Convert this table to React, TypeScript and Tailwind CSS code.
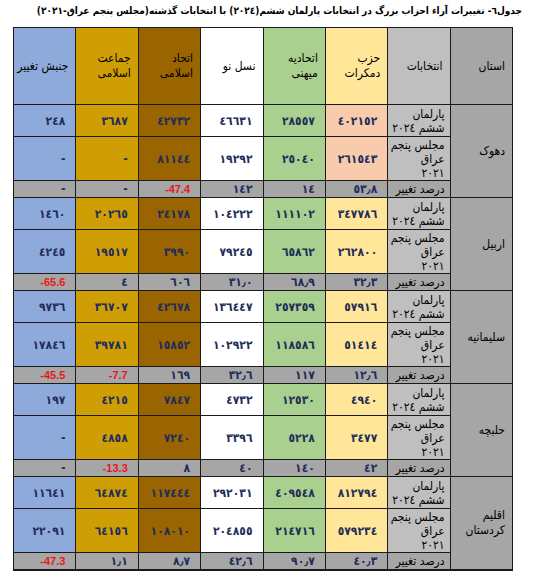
import React from "react";

type Group = { name: React.ReactNode; dem: string; rows: string[][] };

const groups: Group[] = [
  {
    name: "دهوک",
    dem: "bg-[#f8cbad]",
    rows: [
      ["٤٠٢١٥٢", "٢٨٥٥٧", "٤٦٦٣١", "٤٢٧٣٢", "٣٦٨٧", "٢٤٨"],
      ["٢٦١٥٤٣", "٢٥٠٤٠", "١٩٢٩٢", "٨١١٤٤", "-", "-"],
      ["٥٣٫٨", "١٤", "١٤٢", "-47.4", "-", "-"],
    ],
  },
  {
    name: "اربیل",
    dem: "bg-[#ffe699]",
    rows: [
      ["٣٤٧٧٨٦", "١١١١٠٢", "١٠٤٢٢٢", "٢٤١٧٨", "٢٠٢٦٥", "١٤٦٠"],
      ["٢٦٢٨٠٠", "٦٥٨٦٢", "٧٩٢٤٥", "٣٩٩٠", "١٩٥١٧", "٤٢٤٥"],
      ["٣٢٫٣", "٦٨٫٩", "٣١٫٠", "٦٠٦", "٤", "-65.6"],
    ],
  },
  {
    name: "سلیمانیه",
    dem: "bg-[#ffe699]",
    rows: [
      ["٥٧٩١٦", "٢٥٧٣٥٩", "١٣٦٤٤٧", "٤٢٦٧٨", "٣٦٧٠٧", "٩٧٣٦"],
      ["٥١٤١٤", "١١٨٥٨٦", "١٠٢٩٢٢", "١٥٨٥٢", "٣٩٧٨١", "١٧٨٤٦"],
      ["١٢٫٦", "١١٧", "٣٢٫٦", "١٦٩", "-7.7", "-45.5"],
    ],
  },
  {
    name: "حلبچه",
    dem: "bg-[#ffe699]",
    rows: [
      ["٤٩٤٠", "١٢٥٣٠", "٤٧٣٢", "٧٨٤٧", "٤٢١٥", "١٩٧"],
      ["٣٤٧٧", "٥٢٢٨", "٣٣٩٦", "٧٢٤٠", "٤٨٥٨", "-"],
      ["٤٢", "١٤٠", "٤٠", "٨", "-13.3", "-"],
    ],
  },
  {
    name: (
      <>
        اقلیم
        <br />
        کردستان
      </>
    ),
    dem: "bg-[#ffe699]",
    rows: [
      ["٨١٢٧٩٤", "٤٠٩٥٤٨", "٢٩٢٠٣١", "١١٧٤٤٤", "٦٤٨٧٤", "١١٦٤١"],
      ["٥٧٩٢٣٤", "٢١٤٧١٦", "٢٠٤٨٥٥", "١٠٨٠١٠", "٦٤١٥٦", "٢٢٠٩١"],
      ["٤٠٫٣", "٩٠٫٧", "٤٢٫٦", "٨٫٧", "١٫١", "-47.3"],
    ],
  },
];

const colBg = ["", "bg-[#a9d08e]", "bg-white", "bg-[#9a6500]", "bg-[#cf9e04]", "bg-[#8eaadb]"];

const labels: React.ReactNode[] = [
  <>
    پارلمان
    <br />
    ششم ٢٠٢٤
  </>,
  <>
    مجلس پنجم
    <br />
    عراق
    <br />
    ٢٠٢١
  </>,
  <>درصد تغییر</>,
];

function Value({ v }: { v: string }) {
  const red = /^-\d/.test(v);
  if (red)
    return (
      <span dir="ltr" className="font-['Liberation_Sans',sans-serif] font-bold text-[11px] text-[#e8161b]">
        {v}
      </span>
    );
  return <span className="font-bold text-[12px] text-[#1f2d5a]">{v}</span>;
}

const head = "flex items-center pr-[7px] text-[12px] leading-[15px] whitespace-nowrap";

export default function App() {
  return (
    <div
      dir="rtl"
      className="w-[535px] h-[571px] bg-white font-['DejaVu_Sans_Condensed','DejaVu_Sans',sans-serif] text-black overflow-hidden"
    >
      <div className="h-[27px] pr-[13px] pt-[4px] text-[10px] leading-[13px] font-bold whitespace-nowrap">
        جدول٦- تغییرات آراء احزاب  بزرگ در انتخابات پارلمان ششم(٢٠٢٤) با انتخابات گذشته(مجلس پنجم عراق-٢٠٢١)
      </div>
      <div className="mr-[22px] w-[500px] bg-[#1a1a1a] pt-px px-px pb-[2px] grid grid-cols-[repeat(8,1fr)] grid-rows-[76px_repeat(5,31px_43px_16px)] gap-px">
        <div className={"bg-[#a6a6a6] " + head}>استان</div>
        <div className={"bg-[#bfbfbf] " + head}>انتخابات</div>
        <div className={"bg-[#ffe699] " + head}>
          حزب
          <br />
          دمکرات
        </div>
        <div className={"bg-[#a9d08e] " + head}>
          اتحادیه
          <br />
          میهنی
        </div>
        <div className={"bg-white " + head}>نسل نو</div>
        <div className={"bg-[#9a6500] " + head}>
          اتحاد
          <br />
          اسلامی
        </div>
        <div className={"bg-[#cf9e04] " + head}>
          جماعت
          <br />
          اسلامی
        </div>
        <div className={"bg-[#8eaadb] " + head}>جنبش تغییر</div>

        {groups.map((g, gi) => (
          <React.Fragment key={gi}>
            <div className={"row-span-3 bg-[#a6a6a6] " + head}>{g.name}</div>
            {g.rows.map((r, ri) => (
              <React.Fragment key={ri}>
                <div
                  className={
                    (ri === 2 ? "bg-[#a6a6a6] " : "bg-[#bfbfbf] ") +
                    "flex items-center pr-[5px] text-[12px] leading-[14px] whitespace-nowrap"
                  }
                >
                  <div>{labels[ri]}</div>
                </div>
                {r.map((v, ci) => (
                  <div
                    key={ci}
                    className={
                      "flex items-center justify-start pr-[10px] " +
                      (ri === 2 ? "bg-[#a6a6a6]" : ci === 0 ? g.dem : colBg[ci])
                    }
                  >
                    <Value v={v} />
                  </div>
                ))}
              </React.Fragment>
            ))}
          </React.Fragment>
        ))}
      </div>
    </div>
  );
}
